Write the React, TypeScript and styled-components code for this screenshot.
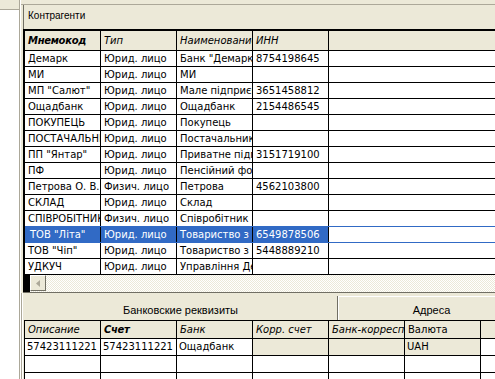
import React from 'react';
import styled, { createGlobalStyle, css } from 'styled-components';

const BEIGE = '#ece9d8';
const SHADOW = '#aca899';
const DARK = '#716f64';
const SELECT = '#316ac5';
const GRID_FONT = '"DejaVu Sans", Verdana, sans-serif';

interface Contractor {
  code: string;
  kind: string;
  name: string;
  inn: string;
}

const contractors: Contractor[] = [
  { code: 'Демарк', kind: 'Юрид. лицо', name: 'Банк "Демарк"', inn: '8754198645' },
  { code: 'МИ', kind: 'Юрид. лицо', name: 'МИ', inn: '' },
  { code: 'МП "Салют"', kind: 'Юрид. лицо', name: 'Мале підприємство "Салют"', inn: '3651458812' },
  { code: 'Ощадбанк', kind: 'Юрид. лицо', name: 'Ощадбанк', inn: '2154486545' },
  { code: 'ПОКУПЕЦЬ', kind: 'Юрид. лицо', name: 'Покупець', inn: '' },
  { code: 'ПОСТАЧАЛЬНИК', kind: 'Юрид. лицо', name: 'Постачальник', inn: '' },
  { code: 'ПП "Янтар"', kind: 'Юрид. лицо', name: 'Приватне підприємство "Янтар"', inn: '3151719100' },
  { code: 'ПФ', kind: 'Юрид. лицо', name: 'Пенсійний фонд', inn: '' },
  { code: 'Петрова О. В.', kind: 'Физич. лицо', name: 'Петрова', inn: '4562103800' },
  { code: 'СКЛАД', kind: 'Юрид. лицо', name: 'Склад', inn: '' },
  { code: 'СПІВРОБІТНИК', kind: 'Физич. лицо', name: 'Співробітник', inn: '' },
  { code: 'ТОВ "Літа"', kind: 'Юрид. лицо', name: 'Товариство з обмеженою відповідальністю "Літа"', inn: '6549878506' },
  { code: 'ТОВ "Чіп"', kind: 'Юрид. лицо', name: 'Товариство з обмеженою відповідальністю "Чіп"', inn: '5448889210' },
  { code: 'УДКУЧ', kind: 'Юрид. лицо', name: 'Управління Державного казначейства', inn: '' },
];

const SELECTED = 11;

const GlobalStyle = createGlobalStyle`
  html, body { margin: 0; padding: 0; background: ${BEIGE}; }
  body {
    font-family: "Liberation Sans", Arial, sans-serif;
    font-size: 11px;
    color: #000;
  }
  * { box-sizing: border-box; }
`;

const Window = styled.div`
  width: 495px;
  height: 379px;
  display: flex;
  overflow: hidden;
  background: ${BEIGE};
`;

const SidePane = styled.div`
  width: 19px;
  flex: none;
  display: flex;
  flex-direction: column;
  background: #fff;
`;

const SideHead = styled.div`
  height: 10px;
  background: ${BEIGE};
  border-bottom: 1px solid ${SHADOW};
`;

const Splitter = styled.div`
  width: 2px;
  flex: none;
  border-left: 1px solid ${SHADOW};
  border-right: 1px solid #fff;
`;

const Main = styled.div`
  flex: 1;
  min-width: 0;
  display: flex;
  flex-direction: column;
`;

const TopStrip = styled.div`
  height: 5px;
  flex: none;
  border-bottom: 1px solid ${SHADOW};
`;

const TitleBar = styled.div`
  height: 24px;
  flex: none;
  margin-left: 2px;
  padding-left: 4px;
  border-left: 1px solid ${DARK};
  line-height: 22px;
  font-size: 10px;
`;

// top grid: contractors
const cols = '76px 76px 76px 76px 1fr';

const Grid = styled.div`
  flex: none;
  margin-left: 2px;
  border-left: 2px solid #000;
  border-top: 2px solid #000;
  background: #fff;
  font-family: ${GRID_FONT};
  font-size: 10px;
`;

const Row = styled.div<{ $head?: boolean; $blueLine?: boolean }>`
  display: grid;
  grid-template-columns: ${cols};
  height: ${p => (p.$head ? 20 : 16)}px;
  border-bottom: 1px solid ${p => (p.$blueLine ? SELECT : '#000')};
  background: ${p => (p.$head ? BEIGE : '#fff')};
`;

const Cell = styled.div<{ $selected?: boolean; $indent?: number }>`
  border-right: 1px solid #000;
  padding-left: ${p => p.$indent ?? 3}px;
  white-space: nowrap;
  overflow: hidden;
  line-height: 15px;
  ${p =>
    p.$selected &&
    css`
      background: ${SELECT};
      color: #fff;
    `}
`;

const HeadCell = styled.div<{ $bold?: boolean; $plain?: boolean; $h?: number }>`
  border-right: 1px solid #000;
  padding-left: 3px;
  white-space: nowrap;
  overflow: hidden;
  line-height: ${p => p.$h ?? 19}px;
  font-style: ${p => (p.$plain ? 'normal' : 'italic')};
  font-weight: ${p => (p.$bold ? 900 : 400)};
  letter-spacing: ${p => (p.$bold ? -0.3 : 0)}px;
`;

const Tail = styled.div``;

// horizontal scrollbar
const HScroll = styled.div`
  flex: none;
  height: 18px;
  margin-left: 2px;
  display: flex;
  border-bottom: 1px solid ${DARK};
  background: repeating-conic-gradient(#fff 0 25%, ${BEIGE} 0 50%) 0 0 / 2px 2px;
`;

const ScrollCorner = styled.div`
  width: 7px;
  background: #000;
`;

const ScrollButton = styled.div`
  width: 16px;
  height: 16px;
  display: flex;
  align-items: center;
  justify-content: center;
  background: ${BEIGE};
  border: 1px solid;
  border-color: #fff ${DARK} ${DARK} #fff;
`;

// bottom part: tabs + bank details
const BottomPanel = styled.div`
  flex: 1;
  min-height: 0;
  display: flex;
  flex-direction: column;
  overflow: hidden;
  border-left: 1px solid ${SHADOW};
  padding-left: 2px;
  box-shadow: inset 1px 0 0 #fff;
`;

const TabStrip = styled.div`
  flex: none;
  height: 27px;
  display: flex;
  overflow: hidden;
  padding-top: 3px;
`;

const Tab = styled.div<{ $active?: boolean; $w: number }>`
  flex: none;
  width: ${p => p.$w}px;
  display: flex;
  align-items: center;
  justify-content: center;
  padding-top: 3px;
  font-size: 11px;
  ${p =>
    p.$active
      ? css`
          border-right: 1px solid ${DARK};
        `
      : css`
          border-left: 1px solid #fff;
          border-top: 1px solid #fff;
        `}
`;

const bankCols = '76px 76px 76px 76px 76px 76px 1fr';

const BankGrid = styled.div`
  flex: 1;
  min-height: 0;
  border-left: 1px solid #000;
  border-top: 1px solid #000;
  background: #fff;
  overflow: hidden;
  font-family: ${GRID_FONT};
  font-size: 10px;
`;

const BankRow = styled.div<{ $head?: boolean }>`
  display: grid;
  grid-template-columns: ${bankCols};
  height: ${p => (p.$head ? 18 : 17)}px;
  border-bottom: 1px solid #000;
  background: ${p => (p.$head ? BEIGE : '#fff')};
`;

const BankCell = styled.div<{ $shaded?: boolean }>`
  border-right: 1px solid #000;
  padding-left: 2px;
  white-space: nowrap;
  overflow: hidden;
  line-height: 16px;
  background: ${p => (p.$shaded ? BEIGE : 'transparent')};
`;

const ArrowLeft = () => (
  <svg width="4" height="7" viewBox="0 0 4 7">
    <path d="M4 0 L0 3.5 L4 7 Z" fill={SHADOW} />
  </svg>
);

const emptyBank = [0, 1, 2, 3, 4, 5];

export default function App() {
  return (
    <>
      <GlobalStyle />
      <Window>
        <SidePane>
          <SideHead />
        </SidePane>
        <Splitter />
        <Main>
          <TopStrip />
          <TitleBar>Контрагенти</TitleBar>
          <Grid>
            <Row $head>
              <HeadCell $bold>Мнемокод</HeadCell>
              <HeadCell>Тип</HeadCell>
              <HeadCell>Наименование</HeadCell>
              <HeadCell>ИНН</HeadCell>
              <Tail />
            </Row>
            {contractors.map((c, i) => {
              const sel = i === SELECTED;
              return (
                <Row key={c.code} $blueLine={sel || i === SELECTED - 1}>
                  <Cell $selected={sel} $indent={sel ? 5 : 3}>{c.code}</Cell>
                  <Cell $selected={sel}>{c.kind}</Cell>
                  <Cell $selected={sel}>{c.name}</Cell>
                  <Cell $selected={sel}>{c.inn}</Cell>
                  <Tail />
                </Row>
              );
            })}
          </Grid>
          <HScroll>
            <ScrollCorner />
            <ScrollButton>
              <ArrowLeft />
            </ScrollButton>
          </HScroll>
          <BottomPanel>
            <TabStrip>
              <Tab $active $w={314}>Банковские реквизиты</Tab>
              <Tab $w={186}>Адреса</Tab>
            </TabStrip>
            <BankGrid>
              <BankRow $head>
                <HeadCell $h={17}>Описание</HeadCell>
                <HeadCell $h={17} $bold>Счет</HeadCell>
                <HeadCell $h={17}>Банк</HeadCell>
                <HeadCell $h={17}>Корр. счет</HeadCell>
                <HeadCell $h={17}>Банк-корреспондент</HeadCell>
                <HeadCell $h={17} $plain>Валюта</HeadCell>
                <Tail />
              </BankRow>
              <BankRow>
                <BankCell>57423111221</BankCell>
                <BankCell>57423111221</BankCell>
                <BankCell>Ощадбанк</BankCell>
                <BankCell $shaded />
                <BankCell $shaded />
                <BankCell $shaded>UAH</BankCell>
                <Tail />
              </BankRow>
              {[0, 1].map(r => (
                <BankRow key={r}>
                  {emptyBank.map(k => (
                    <BankCell key={k} />
                  ))}
                  <Tail />
                </BankRow>
              ))}
            </BankGrid>
          </BottomPanel>
        </Main>
      </Window>
    </>
  );
}
